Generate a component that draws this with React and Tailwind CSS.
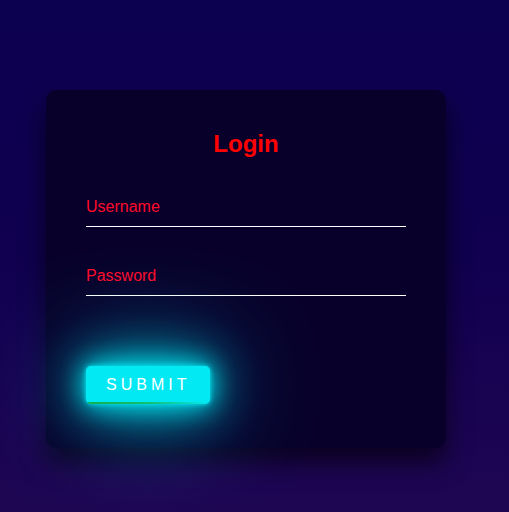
export default function App() {
  return (
    <div
      className="w-full h-[512px] overflow-hidden bg-gradient-to-b from-[#0c0050] via-[#10004f] to-[#1f0653] pl-[46px] pt-[90px]"
      style={{ fontFamily: '"Liberation Sans", Arial, sans-serif' }}
    >
      <div className="w-[400px] rounded-[10px] bg-[#08002b] px-[40px] pt-[40px] pb-[44px] shadow-[0_15px_25px_rgba(0,0,0,0.6)]">
        <h2 className="text-center text-[24px] leading-[28px] font-bold text-[#ff0000] mb-[30px]">Login</h2>
        <div className="relative mb-[30px] h-[39px] border-b border-white">
          <span className="absolute left-0 top-0 py-[10px] text-[16px] leading-[18px] text-[#ff0a2a]">Username</span>
        </div>
        <div className="relative mb-[70px] h-[39px] border-b border-white">
          <span className="absolute left-0 top-0 py-[10px] text-[16px] leading-[18px] text-[#ff0a2a]">Password</span>
        </div>
        <button className="relative overflow-hidden block h-[38px] px-[20px] rounded-[5px] bg-[#03e9f4] text-white text-[16px] tracking-[4px] shadow-[0_0_5px_#03e9f4,0_0_25px_#03e9f4,0_0_50px_#03e9f4,0_0_100px_#03e9f4]">
          <span>SUBMIT</span>
          <span className="absolute left-0 bottom-0 h-[2px] w-full bg-gradient-to-r from-[#10b050] via-[#10c070] to-transparent"></span>
        </button>
      </div>
    </div>
  );
}
